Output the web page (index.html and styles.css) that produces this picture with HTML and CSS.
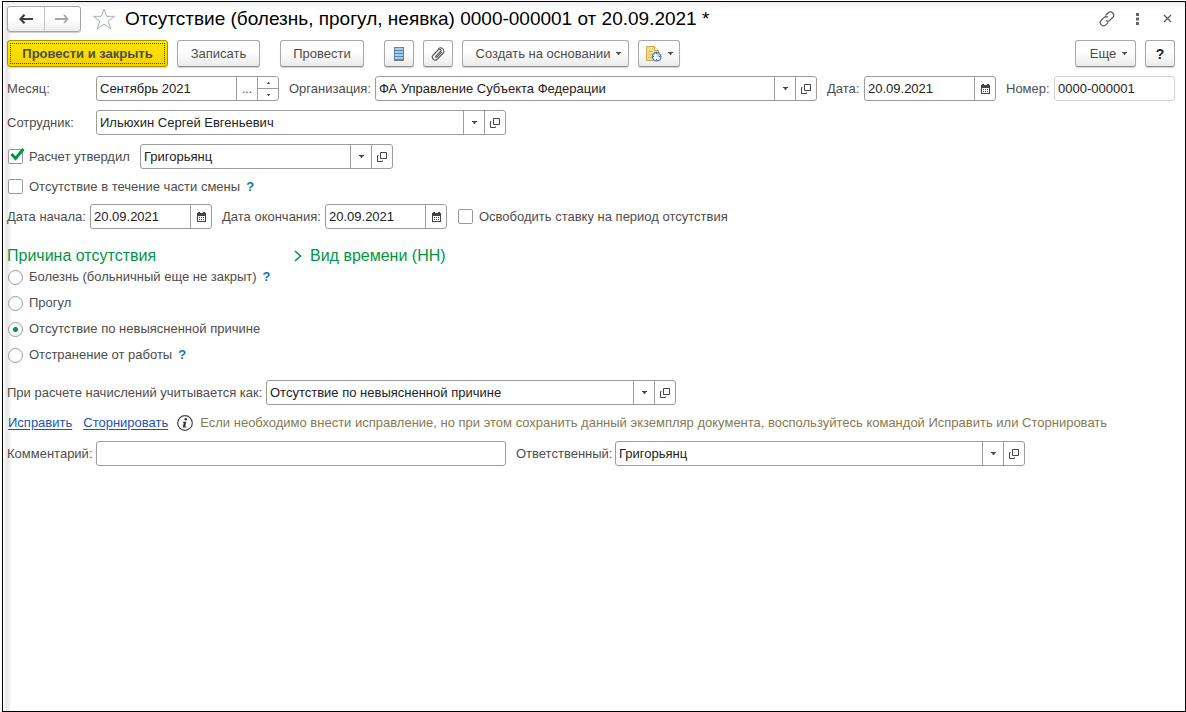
FILE: index.html
```html
<!DOCTYPE html>
<html lang="ru">
<head>
<meta charset="utf-8">
<meta name="viewport" content="width=device-width, initial-scale=1">
<title>Отсутствие (болезнь, прогул, неявка)</title>
<link rel="stylesheet" href="styles.css">
</head>
<body>
<svg class="defs" aria-hidden="true">
  <symbol id="i-down" viewBox="0 0 5 3"><path d="M0 0h5v1H4L3 3H2L1 1H0z"/></symbol>
  <symbol id="i-up" viewBox="0 0 5 3"><path d="M0 3h5L3 0H2z"/></symbol>
  <symbol id="i-open" viewBox="0 0 10 10"><path d="M3.500.5h6v6h-6zM1.500 3.500h-1v6h5v-1" fill="none" stroke="currentColor"/></symbol>
  <symbol id="i-cal" viewBox="0 0 9 10"><path d="M0 1h1V0h2v1h3V0h2v1h1v9H0zM1 4v5h7V4z" fill-rule="evenodd"/><path d="M2 5h1v1H2zM4 5h1v1H4zM6 5h1v1H6zM2 7h1v1H2zM4 7h1v1H4zM6 7h1v1H6z"/></symbol>
</svg>
<main class="window">
  <header class="titlebar">
    <div class="nav">
      <button class="nav-btn" type="button" aria-label="Назад"><svg width="14" height="10" viewBox="0 0 14 10"><path d="M1 5h13M5.500.8 1.500 5l4 4.200" fill="none" stroke="#404040" stroke-width="2.200"/></svg></button>
      <button class="nav-btn nav-next" type="button" aria-label="Вперед"><svg width="14" height="10" viewBox="0 0 14 10"><path d="M0 5h13M9 1l3.500 4L9 9" fill="none" stroke="#a6a6a6" stroke-width="1.800"/></svg></button>
    </div>
    <button class="plain star" type="button" aria-label="Избранное"><svg width="24" height="22" viewBox="0 0 24 22"><path d="M12 1.200 14.700 8.300H22.600L16.300 13 18.600 20.600 12 16.100 5.400 20.600 7.700 13 1.400 8.300H9.300Z" fill="#fff" stroke="#a9aeb3"/></svg></button>
    <h1 class="title">Отсутствие (болезнь, прогул, неявка) 0000-000001 от 20.09.2021 *</h1>
    <div class="tools">
      <button class="plain" type="button" aria-label="Ссылка"><svg width="16" height="16" viewBox="0 0 16 16"><path d="M6.500 4.500 9 2a3.200 3.200 0 0 1 4.700 0 3.200 3.200 0 0 1 0 4.500L11 9.200a3 3 0 0 1-4 .3M9.300 11.300 6.800 13.800a3.200 3.200 0 0 1-4.600 0 3.200 3.200 0 0 1 0-4.500L5 6.600a3 3 0 0 1 4-.3" fill="none" stroke="#555" stroke-width="1.200"/></svg></button>
      <button class="plain" type="button" aria-label="Меню"><svg width="16" height="16" viewBox="0 0 16 16"><path d="M7 2h3v3H7zM7 6.500h3v3H7zM7 11h3v3H7z" fill="#666"/></svg></button>
      <button class="plain" type="button" aria-label="Закрыть"><svg width="16" height="16" viewBox="0 0 16 16"><path d="m5 4 7 7M12 4l-7 7" stroke="#555" stroke-width="1.200"/></svg></button>
    </div>
  </header>

  <div class="toolbar">
    <button class="btn btn-main" type="button">Провести и закрыть</button>
    <button class="btn btn-save" type="button">Записать</button>
    <button class="btn btn-post" type="button">Провести</button>
    <button class="btn btn-icon btn-list" type="button" aria-label="Движения документа"><svg width="10" height="14" viewBox="0 0 10 14"><path d="M0 0h10v14H0z" fill="#5a86a8"/><path d="M1 1h8v2H1zM1 4h8v2H1zM1 7h8v2H1zM1 10h8v2H1z" fill="#a9cbe3"/></svg></button>
    <button class="btn btn-icon" type="button" aria-label="Файлы"><svg width="14" height="14" viewBox="0 0 14 14"><path d="M4.300 9.700 9.500 4.300a1.300 1.300 0 0 0-1.900-1.800L2.200 8a2.900 2.900 0 0 0 4.100 4.200l5.600-5.700a3.200 3.200 0 0 0-4.500-4.600M4.300 9.700a1.300 1.300 0 0 0 1.900.1l4.700-4.900" fill="none" stroke="#555" stroke-width="1.100"/></svg></button>
    <button class="btn btn-create" type="button">Создать на основании <svg class="arr" width="5" height="3"><use href="#i-down"/></svg></button>
    <button class="btn btn-task" type="button" aria-label="Напоминание"><svg width="16" height="16" viewBox="0 0 16 16"><path d="M.5.500h8l4 4v10H.5z" fill="#f6dc8a" stroke="#d1a94c"/><path d="M8.500.500v4h4" fill="#fff3c4" stroke="#d1a94c"/><path d="M2.500 5.500h4M2.500 8.500h4M2.500 11.500h3" stroke="#d8b65c"/><circle cx="10.700" cy="10.700" r="4.200" fill="#fff" stroke="#4b81b8" stroke-width="1.400"/><path d="M10.700 10.700V7.500a3.200 3.200 0 0 1 3 3.200z" fill="#a9cbe3"/><path d="M10 7h1v1h-1zM10 13h1v1h-1zM7 10h1v1H7zM13 10h1v1h-1z" fill="#c33"/></svg><svg class="arr" width="5" height="3"><use href="#i-down"/></svg></button>
    <button class="btn btn-more" type="button">Еще <svg class="arr" width="5" height="3"><use href="#i-down"/></svg></button>
    <button class="btn btn-icon btn-help" type="button">?</button>
  </div>

  <form class="form">
    <div class="row">
      <label class="lbl" for="month">Месяц:</label>
      <div class="field w-month"><input id="month" value="Сентябрь 2021"><button class="fb dots" type="button" aria-label="Выбрать">...</button>
        <div class="spin"><button type="button" aria-label="Больше"><svg width="3" height="2"><use href="#i-up"/></svg></button><button type="button" aria-label="Меньше"><svg width="3" height="2"><use href="#i-down"/></svg></button></div></div>
      <label class="lbl-org" for="org">Организация:</label>
      <div class="field grow"><input id="org" value="ФА Управление Субъекта Федерации"><button class="fb" type="button" aria-label="Список"><svg width="5" height="3"><use href="#i-down"/></svg></button><button class="fb" type="button" aria-label="Открыть"><svg width="10" height="10"><use href="#i-open"/></svg></button></div>
      <label class="lbl-date" for="date">Дата:</label>
      <div class="field w-date"><input id="date" value="20.09.2021"><button class="fb" type="button" aria-label="Календарь"><svg width="9" height="10"><use href="#i-cal"/></svg></button></div>
      <label class="lbl-num" for="num">Номер:</label>
      <div class="field w-num pale"><input id="num" value="0000-000001"></div>
    </div>

    <div class="row">
      <label class="lbl" for="emp">Сотрудник:</label>
      <div class="field w-wide"><input id="emp" value="Ильюхин Сергей Евгеньевич"><button class="fb" type="button" aria-label="Список"><svg width="5" height="3"><use href="#i-down"/></svg></button><button class="fb" type="button" aria-label="Открыть"><svg width="10" height="10"><use href="#i-open"/></svg></button></div>
    </div>

    <div class="row">
      <span class="check-wrap"><input class="check" type="checkbox" id="approved" checked><svg class="tick" width="15" height="13" viewBox="0 0 15 13"><path d="M1.500 6 5.500 10.500 13.500 1" fill="none" stroke="#009646" stroke-width="3"/></svg></span>
      <label class="lbl-appr" for="approved">Расчет утвердил</label>
      <div class="field w-appr"><input aria-label="Утвердил" value="Григорьянц"><button class="fb" type="button" aria-label="Список"><svg width="5" height="3"><use href="#i-down"/></svg></button><button class="fb" type="button" aria-label="Открыть"><svg width="10" height="10"><use href="#i-open"/></svg></button></div>
    </div>

    <div class="row row-check">
      <span class="check-wrap"><input class="check" type="checkbox" id="part"></span>
      <label for="part">Отсутствие в течение части смены</label>
      <button class="plain hint" type="button">?</button>
    </div>

    <div class="row row-dates">
      <label class="lbl-from" for="from">Дата начала:</label>
      <div class="field w-dates"><input id="from" value="20.09.2021"><button class="fb" type="button" aria-label="Календарь"><svg width="9" height="10"><use href="#i-cal"/></svg></button></div>
      <label class="lbl-to" for="to">Дата окончания:</label>
      <div class="field w-dates"><input id="to" value="20.09.2021"><button class="fb" type="button" aria-label="Календарь"><svg width="9" height="10"><use href="#i-cal"/></svg></button></div>
      <span class="check-wrap gap"><input class="check" type="checkbox" id="free"></span>
      <label for="free">Освободить ставку на период отсутствия</label>
    </div>

    <div class="groups">
      <section class="reason">
        <h2 class="heading">Причина отсутствия</h2>
        <div class="opt"><input class="radio" type="radio" name="r" id="r1"><label for="r1">Болезнь (больничный еще не закрыт)</label><button class="plain hint" type="button">?</button></div>
        <div class="opt"><input class="radio" type="radio" name="r" id="r2"><label for="r2">Прогул</label></div>
        <div class="opt"><input class="radio" type="radio" name="r" id="r3" checked><label for="r3">Отсутствие по невыясненной причине</label></div>
        <div class="opt"><input class="radio" type="radio" name="r" id="r4"><label for="r4">Отстранение от работы</label><button class="plain hint" type="button">?</button></div>
      </section>
      <section>
        <h2 class="heading"><button class="plain expand" type="button"><svg width="8" height="12" viewBox="0 0 8 12"><path d="m1 1 5.500 5L1 11" fill="none" stroke="#009646" stroke-width="1.600"/></svg>Вид времени (НН)</button></h2>
      </section>
    </div>

    <div class="row">
      <label class="lbl-calc" for="calc">При расчете начислений учитывается как:</label>
      <div class="field w-wide"><input id="calc" value="Отсутствие по невыясненной причине"><button class="fb" type="button" aria-label="Список"><svg width="5" height="3"><use href="#i-down"/></svg></button><button class="fb" type="button" aria-label="Открыть"><svg width="10" height="10"><use href="#i-open"/></svg></button></div>
    </div>

    <div class="row row-links">
      <a class="link link-fix" href="#">Исправить</a>
      <a class="link link-storno" href="#">Сторнировать</a>
      <svg class="info" width="16" height="16" viewBox="0 0 16 16"><circle cx="8" cy="8" r="7.300" fill="#fff" stroke="#444" stroke-width="1.200"/><circle cx="8.800" cy="4.300" r="1.300" fill="#333"/><path d="M6 6.700h3.300L8.200 11.500h1.300l-.3 1H5.700l1.100-4.800H5.800z" fill="#333"/></svg>
      <span class="note">Если необходимо внести исправление, но при этом сохранить данный экземпляр документа, воспользуйтесь командой Исправить или Сторнировать</span>
    </div>

    <div class="row">
      <label class="lbl" for="comment">Комментарий:</label>
      <div class="field w-wide"><input id="comment" value=""></div>
      <label class="lbl-resp" for="resp">Ответственный:</label>
      <div class="field w-wide"><input id="resp" value="Григорьянц"><button class="fb" type="button" aria-label="Список"><svg width="5" height="3"><use href="#i-down"/></svg></button><button class="fb" type="button" aria-label="Открыть"><svg width="10" height="10"><use href="#i-open"/></svg></button></div>
    </div>
  </form>
</main>
</body>
</html>
```
FILE: styles.css
```css
* { box-sizing: border-box; }

body {
  margin: 0;
  padding: 1px 0 0 2px;
  background: #fff;
  color: #4d4d4d;
  font: 13px/16px "Liberation Sans", Arial, sans-serif;
}

button, input { font: inherit; color: inherit; margin: 0; }
button { padding: 0; cursor: pointer; }
svg { flex: none; display: block; fill: currentColor; }
label { white-space: nowrap; }
.defs { display: none; }

.window {
  min-height: calc(100vh - 1px);
  padding: 4px 10px 10px 4px;
  border: 1px solid #000;
  background:
    linear-gradient(90deg, #fdfdfd, #e6e6e6 4px, #fafafa 8px, transparent 9px) no-repeat,
    linear-gradient(#f0f0f0, #fafafa 5px, #fff 9px) no-repeat #fff;
}

.plain {
  display: flex;
  align-items: center;
  justify-content: center;
  border: 0;
  background: none;
}

/* Title bar */
.titlebar { display: flex; align-items: center; height: 26px; }
.nav {
  display: flex;
  width: 74px;
  height: 26px;
  border: 1px solid #a6a6a6;
  border-radius: 3px;
  background: linear-gradient(#fff 50%, #ececec);
  box-shadow: 0 1px 1px #ccc;
}
.nav-btn {
  display: flex;
  flex: 1;
  align-items: center;
  justify-content: center;
  border: 0;
  background: none;
}
.nav-next { border-left: 1px solid #c4c4c4; }
.star { margin-left: 11px; }
.title {
  flex: 1;
  margin: 0 0 0 9px;
  color: #000;
  font-size: 19px;
  font-weight: 400;
  line-height: 22px;
  white-space: nowrap;
}
.tools { display: flex; gap: 14px; }

/* Command bar */
.toolbar { display: flex; align-items: center; margin-top: 8px; }
.btn {
  display: flex;
  flex: none;
  align-items: center;
  justify-content: center;
  height: 27px;
  border: 1px solid #a8a8a8;
  border-bottom-color: #8e8e8e;
  border-radius: 3px;
  background: linear-gradient(#fff 40%, #ebebeb);
  box-shadow: 0 1px 1px #d0d0d0;
}
.btn-main {
  width: 161px;
  border-color: #ab9000;
  background: linear-gradient(#ffe600, #f5d200);
  font-weight: 700;
  outline: 1px dotted #1c3c90;
  outline-offset: -4px;
}
.btn-save { width: 83px; margin-left: 9px; }
.btn-post { width: 84px; margin-left: 20px; }
.btn-icon { width: 30px; margin-left: 9px; }
.btn-list { margin-left: 20px; }
.btn-create { width: 167px; margin-left: 9px; padding-left: 6px; }
.btn-task { width: 42px; margin-left: 9px; }
.btn-more { width: 61px; margin-left: auto; padding-left: 6px; }
.btn-help { color: #222; font-size: 14px; font-weight: 700; }
.arr { margin-left: 6px; }

/* Form */
.form { display: flex; flex-direction: column; gap: 9px; margin-top: 9px; }
.row { display: flex; align-items: center; min-height: 25px; }
.lbl { width: 89px; }
.lbl-org { width: 86px; margin-left: 10px; }
.lbl-date { width: 37px; margin-left: 10px; }
.lbl-num { width: 48px; margin-left: 10px; }
.lbl-appr { width: 111px; }
.lbl-from { width: 83px; }
.lbl-to { width: 103px; margin-left: 10px; }
.lbl-calc { width: 259px; }
.lbl-resp { width: 99px; margin-left: 10px; }

.field {
  display: flex;
  height: 25px;
  border: 1px solid #9c9c9c;
  border-radius: 3px;
  background: #fff;
  color: #444;
  overflow: hidden;
}
.field input {
  flex: 1;
  width: 0;
  min-width: 0;
  padding: 0 3px;
  border: 0;
  outline: 0;
  background: none;
  color: #222;
}
.grow { flex: 1; }
.pale { border-color: #d2d2d2; }
.w-month { width: 183px; }
.w-date { width: 132px; }
.w-num { width: 121px; }
.w-wide { width: 410px; }
.w-appr { width: 253px; }
.w-dates { width: 122px; }

.fb {
  display: flex;
  flex: none;
  align-items: center;
  justify-content: center;
  width: 21px;
  border: 0;
  border-left: 1px solid #9c9c9c;
  background: none;
}
.dots { font-size: 12px; }
.spin {
  display: flex;
  flex-direction: column;
  width: 21px;
  border-left: 1px solid #9c9c9c;
}
.spin button {
  display: flex;
  flex: 1;
  align-items: center;
  justify-content: center;
  border: 0;
  background: none;
}
.spin button + button { border-top: 1px solid #9c9c9c; }

.check-wrap { position: relative; display: flex; margin: 0 6px 0 1px; }
.check-wrap.gap { margin-left: 11px; }
.check, .radio {
  flex: none;
  width: 15px;
  height: 15px;
  appearance: none;
  border: 1px solid #999;
  border-radius: 2px;
  background: #fff;
}
.tick { position: absolute; left: 2px; top: -1px; pointer-events: none; }
.radio { margin: 0 6px 0 1px; border-radius: 50%; }
.radio:checked { background: radial-gradient(circle, #009646 2px, #fff 3px); }
.hint { margin-left: 6px; color: #0b74b8; font-weight: 700; }

.row-check { min-height: 17px; }

.groups { display: flex; margin: 9px 0 3px; }
.reason { width: 287px; }
.heading {
  margin: 0;
  color: #009646;
  font-size: 16px;
  font-weight: 400;
  line-height: 17px;
}
.expand { gap: 8px; line-height: 17px; }
.opt { display: flex; align-items: center; height: 26px; }

.row-links { min-height: 18px; }
.link { color: #1a54b5; text-decoration: underline; text-underline-offset: 2px; }
.link-fix { margin-left: 1px; }
.link-storno { margin-left: 11px; }
.info { margin-left: 9px; }
.note { margin-left: 7px; color: #857a52; }
```
